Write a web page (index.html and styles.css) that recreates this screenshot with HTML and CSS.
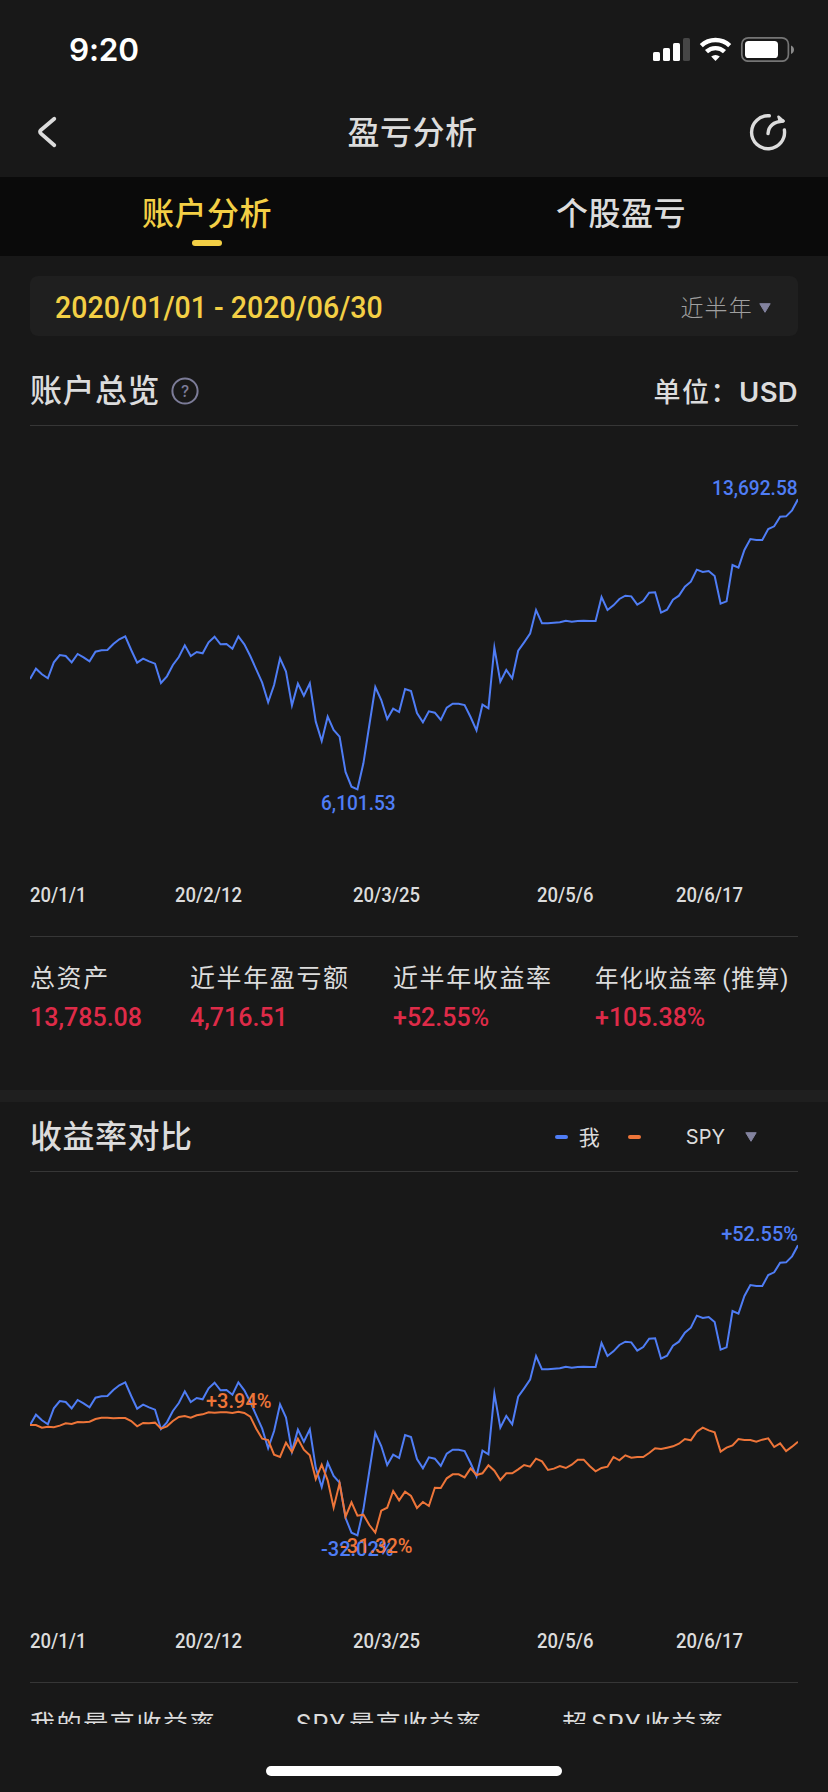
FILE: index.html
```html
<!DOCTYPE html>
<html lang="zh-CN">
<head>
<meta charset="utf-8">
<title>盈亏分析</title>
<link rel="stylesheet" href="styles.css">
</head>
<body>
<div class="screen">
  <header class="status">
    <span class="clock">9:20</span>
    <svg class="status-icons" width="142" height="26" viewBox="653 36 142 26">
      <g fill="#fff">
        <rect x="653" y="52" width="7" height="9" rx="1.6"/>
        <rect x="663" y="48" width="7" height="13" rx="1.6"/>
        <rect x="673" y="43" width="7" height="18" rx="1.6"/>
        <rect x="683" y="38" width="7" height="23" rx="1.6" fill="#464646"/>
        <rect x="745" y="41" width="33" height="17" rx="3.6"/>
        <path d="M711.2 56.6a6.4 6.4 0 0 1 8.600 0l-4.300 4.500z"/>
      </g>
      <g fill="none" stroke="#fff" stroke-width="4.400">
        <path d="M701.300 45.700a20.500 20.500 0 0 1 28.400 0"/>
        <path d="M706.500 51.700a13 13 0 0 1 18 0"/>
      </g>
      <rect x="741.800" y="37.800" width="46.600" height="23.400" rx="6.500" fill="none" stroke="#757575" stroke-width="1.700"/>
      <path d="M791 45.500c4 1.400 4 7 0 8.500z" fill="#8a8a8a"/>
    </svg>
  </header>

  <nav class="navbar">
    <svg class="back" width="22" height="36" viewBox="36 114 22 36" fill="none" stroke="#dcdcdc" stroke-width="3.800" stroke-linecap="round" stroke-linejoin="round">
      <path d="M54.300 118.700 41 130q-2 1.800 0 3.600L54.300 145.300"/>
    </svg>
    <h1 class="nav-title">盈亏分析</h1>
    <svg class="share" width="40" height="40" viewBox="748 111 40 40" fill="none" stroke="#dcdcdc" stroke-width="3.400" stroke-linecap="round" stroke-linejoin="round">
      <path d="M769.300 114.800A16.500 16.500 0 1 0 784.400 129"/>
      <path d="M768 132.600C768.600 125 773.500 120.800 783 120"/>
      <path d="M778.500 115.700 783.500 120.200 780 120.600z" stroke-width="2.600"/>
    </svg>
  </nav>

  <div class="tabs">
    <div class="tab tab-active">账户分析</div>
    <div class="tab">个股盈亏</div>
  </div>

  <main class="content">
    <section class="overview">
      <div class="range">
        <span class="range-dates"><span>2020/01/01 - 2020/06/30</span></span>
        <span class="range-preset">近半年<svg width="12" height="10" viewBox="0 0 12 10"><path d="M.800.700H11.200L6 9.300z" fill="#83839f" stroke="#83839f" stroke-linejoin="round"/></svg></span>
      </div>
      <div class="heading">
        <h2>账户总览</h2>
        <svg class="help" width="28" height="28" viewBox="0 0 28 28"><circle cx="14" cy="14" r="12.600" fill="none" stroke="#7c7c98" stroke-width="2"/><text x="14" y="19.600" text-anchor="middle">?</text></svg>
        <span class="unit">单位：<b>USD</b></span>
      </div>
      <div class="chart">
        <svg class="plot" viewBox="0 0 129 990" preserveAspectRatio="none">
          <polyline class="line line-me" points="0 627 1 596 2 613 3 625 4 577 5 555 6 558 7 577 8 552 9 562 10 574 11 545 12 541 13 540 14 522 15 508 16 499 17 540 18 578 19 566 20 574 21 581 22 639 23 619 24 585 25 561 26 526 27 558 28 546 29 550 30 517 31 500 32 523 33 522 34 536 35 499 36 523 37 558 38 598 39 638 40 697 41 645 42 565 43 605 44 706 45 641 46 677 47 640 48 755 49 813 50 740 51 780 52 800 53 906 54 950 55 958 56 880 57 765 58 651 59 690 60 747 61 716 62 726 63 657 64 663 65 729 66 757 67 724 68 728 69 750 70 713 71 701 72 701 73 705 74 741 75 781 76 704 77 715 78 533 79 635 80 600 81 625 82 542 83 517 84 491 85 420 86 460 87 460 88 458 89 457 90 452 91 455 92 453 93 452 94 453 95 453 96 381 97 420 98 406 99 387 100 377 101 379 102 404 103 393 104 368 105 367 106 428 107 419 108 389 109 377 110 350 111 335 112 299 113 306 114 303 115 318 116 401 117 394 118 285 119 293 120 240 121 207 122 210 123 210 124 177 125 169 126 140 127 139 128 121 129 88"/>
        </svg>
        <span class="tag me tag-high tag-amount">13,692.58</span>
        <span class="tag me tag-low tag-amount">6,101.53</span>
      </div>
      <div class="axis"><span>20/1/1</span><span>20/2/12</span><span>20/3/25</span><span>20/5/6</span><span>20/6/17</span></div>
      <div class="stats">
        <div class="stat"><p>总资产</p><strong>13,785.08</strong></div>
        <div class="stat"><p>近半年盈亏额</p><strong>4,716.51</strong></div>
        <div class="stat"><p>近半年收益率</p><strong>+52.55%</strong></div>
        <div class="stat stat-small"><p>年化收益率 (推算)</p><strong>+105.38%</strong></div>
      </div>
    </section>

    <section class="compare">
      <div class="heading">
        <h2>收益率对比</h2>
        <div class="legend">
          <i class="dash dash-me"></i><span class="legend-me">我</span>
          <i class="dash dash-spy"></i><span class="legend-spy">SPY</span>
          <svg width="12" height="10" viewBox="0 0 12 10"><path d="M.800.700H11.200L6 9.300z" fill="#83839f" stroke="#83839f" stroke-linejoin="round"/></svg>
        </div>
      </div>
      <div class="chart">
        <svg class="plot" viewBox="0 0 129 990" preserveAspectRatio="none">
          <polyline class="line line-me" points="0 627 1 596 2 613 3 625 4 577 5 555 6 558 7 577 8 552 9 562 10 574 11 545 12 541 13 540 14 522 15 508 16 499 17 540 18 578 19 566 20 574 21 581 22 639 23 619 24 585 25 561 26 526 27 558 28 546 29 550 30 517 31 500 32 523 33 522 34 536 35 499 36 523 37 558 38 598 39 638 40 697 41 645 42 565 43 605 44 706 45 641 46 677 47 640 48 755 49 813 50 740 51 780 52 800 53 906 54 950 55 958 56 880 57 765 58 651 59 690 60 747 61 716 62 726 63 657 64 663 65 729 66 757 67 724 68 728 69 750 70 713 71 701 72 701 73 705 74 741 75 781 76 704 77 715 78 533 79 635 80 600 81 625 82 542 83 517 84 491 85 420 86 460 87 460 88 458 89 457 90 452 91 455 92 453 93 452 94 453 95 453 96 381 97 420 98 406 99 387 100 377 101 379 102 404 103 393 104 368 105 367 106 428 107 419 108 389 109 377 110 350 111 335 112 299 113 306 114 303 115 318 116 401 117 394 118 285 119 293 120 240 121 207 122 210 123 210 124 177 125 169 126 140 127 139 128 121 129 88"/>
          <polyline class="line line-spy" points="0 627 1 627 2 635 3 632 4 634 5 629 6 622 7 624 8 618 9 619 10 617 11 609 12 605 13 605 14 607 15 606 16 606 17 615 18 631 19 621 20 622 21 620 22 638 23 631 24 615 25 603 26 600 27 605 28 598 29 595 30 589 31 590 32 589 33 589 34 591 35 587 36 591 37 602 38 638 39 668 40 672 41 716 42 723 43 680 44 708 45 668 46 701 47 718 48 789 49 746 50 793 51 875 52 802 53 902 54 859 55 899 56 896 57 927 58 950 59 884 60 875 61 825 62 853 63 827 64 840 65 876 66 858 67 870 68 815 69 816 70 787 71 775 72 775 73 784 74 757 75 777 76 772 77 748 78 764 79 792 80 772 81 772 82 760 83 747 84 752 85 728 86 736 87 762 88 758 89 750 90 756 91 746 92 731 93 731 94 750 95 766 96 756 97 752 98 723 99 733 100 718 101 725 102 723 103 723 104 711 105 697 106 699 107 695 108 691 109 683 110 669 111 673 112 647 113 635 114 643 115 649 116 707 117 695 118 688 119 669 120 672 121 672 122 677 123 671 124 667 125 693 126 682 127 705 128 692 129 677"/>
        </svg>
        <span class="tag me tag-high">+52.55%</span>
        <span class="tag me tag-low">-32.02%</span>
        <span class="tag spy tag-spy-high">+3.94%</span>
        <span class="tag spy tag-spy-low">-31.32%</span>
      </div>
      <div class="axis"><span>20/1/1</span><span>20/2/12</span><span>20/3/25</span><span>20/5/6</span><span>20/6/17</span></div>
      <div class="stats stats-thirds">
        <div class="stat"><p>我的最高收益率</p></div>
        <div class="stat"><p>SPY 最高收益率</p></div>
        <div class="stat"><p>超 SPY 收益率</p></div>
      </div>
    </section>
  </main>

  <footer class="home"><span class="home-bar"></span></footer>
</div>
</body>
</html>
```

FILE: styles.css
```css
* { box-sizing: border-box; }
body { margin: 0; background: #181818; }
h1, h2, p { margin: 0; font-weight: 500; }

.screen {
  width: 828px;
  height: 1792px;
  display: flex;
  flex-direction: column;
  overflow: hidden;
  background: #181818;
  color: #dcdcdc;
  font-family: Roboto, "Noto Sans CJK SC", sans-serif;
}

.status {
  height: 88px;
  flex: none;
  display: flex;
  justify-content: space-between;
  align-items: flex-start;
  padding: 36px 33px 0 69px;
}
.clock {
  color: #fff;
  font: 600 31.500px/28px Inter, sans-serif;
  letter-spacing: -.2px;
}

.navbar {
  height: 89px;
  flex: none;
  display: flex;
  justify-content: space-between;
  align-items: center;
  padding: 0 40px 1px 36px;
}
.nav-title {
  font-size: 32px;
  line-height: 40px;
  letter-spacing: .5px;
  padding: 2px 0 0 19px;
}

.tabs {
  height: 79px;
  flex: none;
  display: grid;
  grid-template-columns: 1fr 1fr;
  background: #0a0a0a;
}
.tab {
  display: flex;
  flex-direction: column;
  align-items: center;
  padding-top: 17px;
  font-size: 32px;
  line-height: 40px;
  font-weight: 500;
  letter-spacing: .5px;
}
.tab-active { color: #f3cf45; }
.tab-active::after {
  content: "";
  width: 30px;
  height: 6px;
  margin-top: 6px;
  border-radius: 3px;
  background: #f3cf45;
}

.content {
  height: 1468px;
  flex: none;
  overflow: hidden;
}
.overview {
  padding: 20px 30px 0;
  height: 846px;
  border-bottom: 12px solid #1f1f1f;
}
.compare { padding: 0 30px; }

.range {
  height: 60px;
  display: flex;
  justify-content: space-between;
  align-items: center;
  padding: 0 27px 0 25px;
  border-radius: 8px;
  background: #1f1f1f;
}
.range-dates { color: #f3cf45; font-size: 31px; font-weight: 500; line-height: 60px; padding-top: 3px; }
.range-dates span { display: inline-block; transform: scaleX(.92); transform-origin: left; }
.range-preset {
  display: flex;
  align-items: center;
  gap: 6px;
  color: #9f9f9f;
  font-size: 23px;
  font-weight: 300;
  letter-spacing: 1.2px;
}
.range-preset svg { margin-top: 3px; }

.heading {
  height: 90px;
  display: flex;
  align-items: center;
  padding-top: 20px;
  border-bottom: 1px solid #363636;
}
.compare .heading { height: 70px; padding-top: 0; }
.heading h2 { font-size: 32px; line-height: 40px; letter-spacing: .5px; }
.help { margin-left: 11px; }
.help text { font: 500 15.500px Inter, sans-serif; fill: #7c7c98; }
.unit {
  margin-left: auto;
  font-size: 27px;
  font-weight: 500;
  letter-spacing: 1.500px;
}
.unit b { font: 600 27.500px Inter, sans-serif; letter-spacing: .3px; }

.legend {
  margin-left: auto;
  display: flex;
  align-items: center;
  padding-right: 41px;
  font-size: 21px;
}
.dash { width: 13px; height: 4px; border-radius: 2px; }
.dash-me { background: #4f7df5; }
.dash-spy { background: #ee7539; }
.legend-me { margin: -2px 28px 0 11px; }
.legend-spy { margin: 0 20px 0 45px; font: 400 20px Inter, sans-serif; }

.chart {
  position: relative;
  height: 454px;
  padding-top: 44px;
}
.plot { display: block; width: 768px; height: 330px; }
.line { fill: none; stroke-width: 2; stroke-miterlimit: 10; vector-effect: non-scaling-stroke; }
.line-me { stroke: #4f7df5; }
.line-spy { stroke: #ee7539; }
.tag { position: absolute; font-size: 20px; line-height: 24px; font-weight: 500; }
.me { color: #4f7df5; }
.spy { color: #ee7539; }
.tag-amount { transform: scaleX(.955); }
.tag-high { right: 0; top: 50px; transform-origin: right; }
.tag-low { left: 291px; top: 365px; transform-origin: left; }
.tag-spy-high { left: 176px; top: 217px; }
.tag-spy-low { left: 310px; top: 362px; }

.axis {
  height: 57px;
  display: grid;
  grid-template-columns: 144.500px 178.500px 184px 139px auto;
  border-bottom: 1px solid #363636;
  font-size: 20px;
  font-weight: 500;
  line-height: 30px;
}
.axis span { transform: scaleX(.925); transform-origin: left; }

.stats {
  display: grid;
  grid-template-columns: 160px 203px 202px auto;
  padding-top: 23px;
}
.stats-thirds { grid-template-columns: 266px 266px auto; }
.stat p { font-size: 25px; line-height: 38px; font-weight: 400; letter-spacing: 1.600px; white-space: nowrap; }
.stats-thirds p { word-spacing: -5px; }
.stat-small p { font-size: 23.500px; letter-spacing: 1px; word-spacing: -2px; }
.stat strong { display: block; color: #de2b48; font-size: 25px; line-height: 38px; font-weight: 500; margin-top: 1px; }

.home {
  height: 68px;
  flex: none;
  display: flex;
  justify-content: center;
  padding-top: 42px;
}
.home-bar { width: 296px; height: 10px; border-radius: 5px; background: #fff; }
```
